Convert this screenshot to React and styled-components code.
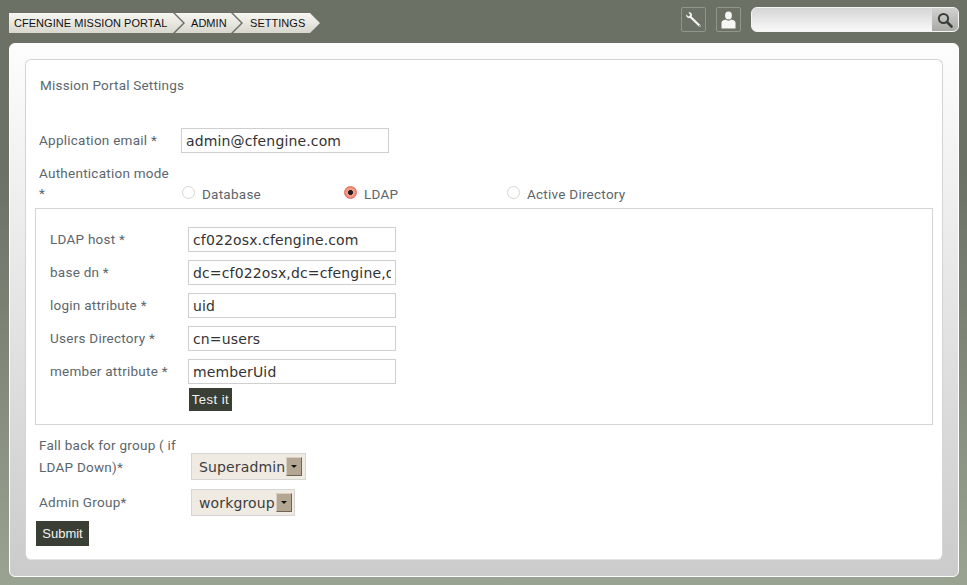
import React from 'react'
import styled, { createGlobalStyle } from 'styled-components'

const Global = createGlobalStyle`
html, body {
  margin: 0;
  padding: 0;
  height: 100%;
}
body {
  background: linear-gradient(#6b7165 0%, #6b7165 30%, #9aa392 100%);
  font-family: Roboto, "Liberation Sans", sans-serif;
}
`

const Page = styled.div`
  width: 967px;
  height: 585px;
  padding: 0 8px 8px 9px;
  box-sizing: border-box;
  display: flex;
  flex-direction: column;
  overflow: hidden;
`

const TopBar = styled.header`
  height: 43px;
  display: flex;
  align-items: flex-start;
  justify-content: space-between;
`

const Crumbs = styled.nav`
  display: flex;
  margin-top: 13px;
`

const Crumb = styled.span`
  height: 20px;
  display: flex;
  align-items: center;
  box-sizing: border-box;
  width: ${p => p.$w}px;
  padding-left: ${p => p.$pad}px;
  margin-left: ${p => (p.$first ? 0 : -8)}px;
  font: 11px "Liberation Sans", Arial, sans-serif;
  letter-spacing: 0.04px;
  color: #111;
  background: linear-gradient(#f7f6f2, #d9d8ce);
  clip-path: ${p => p.$first
    ? 'polygon(0 0, calc(100% - 10px) 0, 100% 50%, calc(100% - 10px) 100%, 0 100%)'
    : 'polygon(0 0, calc(100% - 10px) 0, 100% 50%, calc(100% - 10px) 100%, 0 100%, 10px 50%)'};
`

const Tools = styled.div`
  display: flex;
  align-items: center;
  margin-top: 7px;
`

const ToolButton = styled.a`
  width: 25px;
  height: 25px;
  margin-right: 10px;
  box-sizing: border-box;
  border: 1px solid #92978c;
  border-radius: 2px;
  display: flex;
  align-items: center;
  justify-content: center;
`

const Search = styled.div`
  width: 208px;
  height: 25px;
  box-sizing: border-box;
  border: 1px solid #f4f4f2;
  border-radius: 6px;
  overflow: hidden;
  display: flex;
  background: linear-gradient(#d6d6d6, #f8f8f8);
`

const SearchField = styled.div`
  flex: 1;
`

const SearchButton = styled.div`
  width: 26px;
  display: flex;
  align-items: center;
  justify-content: center;
  background: linear-gradient(#d2d2d0, #a9aaa6);
`

const Outer = styled.main`
  width: 950px;
  height: 534px;
  box-sizing: border-box;
  padding: 15px;
  border: 1px solid #fff;
  border-radius: 6px;
  background: linear-gradient(#fdfdfd, #cbcbcb);
`

const Inner = styled.section`
  height: 501px;
  box-sizing: border-box;
  background: #fff;
  border: 1px solid #d4d4d4;
  border-bottom-color: #e4e4e4;
  border-radius: 6px;
  padding: 0 9px;
  color: #5c666c;
  font-size: 13.5px;
`

const Title = styled.h1`
  margin: 16px 0 0 5px;
  font-size: 13.5px;
  font-weight: 400;
  line-height: 18px;
  letter-spacing: 0.2px;
  color: #5c6870;
`

const Row = styled.div`
  display: flex;
  align-items: ${p => p.$align || 'center'};
  margin-top: ${p => p.$top || 0}px;
`

const Label = styled.label`
  display: block;
  box-sizing: border-box;
  width: ${p => p.$w ?? 142}px;
  margin: ${p => p.$shift ?? -2}px 0 ${p => p.$below ?? 0}px ${p => p.$left ?? 4}px;
  padding-right: ${p => p.$wrap ?? 0}px;
  line-height: ${p => p.$lh ?? 22}px;
  letter-spacing: 0.25px;
  flex-shrink: 0;
`

const Field = styled.input`
  width: 208px;
  height: 25px;
  box-sizing: border-box;
  padding: 0 4px;
  border: 1px solid #cfcfcf;
  background: #fff;
  outline: none;
  font: 14px "DejaVu Sans", Verdana, sans-serif;
  letter-spacing: 0.14px;
  color: #333;
`

const RadioGroup = styled.div`
  display: flex;
  margin-left: 1px;
`

const RadioOption = styled.div`
  width: ${p => p.$w}px;
  display: flex;
  align-items: center;
  letter-spacing: 0.25px;
  line-height: 18px;
`

const RadioDot = styled.span`
  width: 13px;
  height: 13px;
  margin: -3px 7px 0 0;
  box-sizing: border-box;
  border-radius: 50%;
  border: 1px solid ${p => (p.$on ? '#e0705c' : '#d8d6cf')};
  background: ${p => (p.$on
    ? 'radial-gradient(circle, #222 0 2.2px, #f5a596 2.8px, #ec6a56 100%)'
    : '#fff')};
`

const LdapBox = styled.fieldset`
  margin: 5px 0 0 0;
  padding: 18px 0 13px 14px;
  height: 217px;
  box-sizing: border-box;
  border: 1px solid #d4d4d4;
`

const LdapRow = styled(Row)`
  margin-bottom: 8px;
`

const ActionButton = styled.button`
  display: block;
  border: none;
  padding: 0;
  height: ${p => p.$h}px;
  width: ${p => p.$w}px;
  margin: ${p => p.$top ?? 0}px 0 0 ${p => p.$left}px;
  background: #3a3f35;
  color: #f2f2f2;
  font: 13px "Liberation Sans", Arial, sans-serif;
  letter-spacing: ${p => p.$spacing ?? 0}px;
`

const Select = styled.div`
  width: ${p => p.$w}px;
  height: 27px;
  box-sizing: border-box;
  border: 1px solid #d5d5d3;
  background: #efeae2;
  display: flex;
  align-items: center;
  padding-left: 7px;
  font: 14px "DejaVu Sans", Verdana, sans-serif;
  letter-spacing: 0.14px;
  color: #3d3d3d;
`

const SelectArrow = styled.span`
  width: 16px;
  height: 19px;
  margin-left: 1px;
  box-sizing: border-box;
  border: 1px solid;
  border-color: #d8d0c2 #6e6558 #6e6558 #d8d0c2;
  background: #b3a692;
  display: flex;
  align-items: center;
  justify-content: center;

  &::after {
    content: "";
    border: 3px solid transparent;
    border-top: 3px solid #111;
    border-bottom: none;
  }
`

const ldapFields = [
  ['LDAP host *', 'cf022osx.cfengine.com'],
  ['base dn *', 'dc=cf022osx,dc=cfengine,dc=com'],
  ['login attribute *', 'uid'],
  ['Users Directory *', 'cn=users'],
  ['member attribute *', 'memberUid'],
]

const WrenchIcon = () => (
  <svg width="18" height="18" viewBox="0 0 18 18">
    <path d="M1.2 3.6 L3.6 5.6 L5.4 4 L3.4 1.4 C5.4 .8 7 2 7 4 C7 4.6 6.9 5 6.7 5.4 L15.4 14 C16.4 15.4 15 16.6 13.8 15.6 L5 7 C3 7.6 .8 6.2 1.2 3.6 Z" fill="#f4f4f2" />
    <circle cx="14.6" cy="14.8" r=".7" fill="#6b7165" />
  </svg>
)

const UserIcon = () => (
  <svg width="15" height="18" viewBox="0 0 15 18">
    <ellipse cx="7.5" cy="4.4" rx="3.4" ry="4" fill="#f6f6f4" />
    <path d="M.5 17.5 V11.5 C.5 10 2.5 9.2 4.9 8.6 C6 10 9 10 10.1 8.6 C12.5 9.2 14.5 10 14.5 11.5 V17.5 Z" fill="#f6f6f4" />
  </svg>
)

const SearchIcon = () => (
  <svg width="16" height="16" viewBox="0 0 16 16" fill="none" stroke="#3a3f3a">
    <circle cx="6.5" cy="6.5" r="4.6" strokeWidth="2" />
    <path d="M10 10 L14.5 14.5" strokeWidth="2.6" strokeLinecap="round" />
  </svg>
)

export default function App() {
  return (
    <Page>
      <Global />
      <TopBar>
        <Crumbs>
          <Crumb $first $w={174} $pad={5}>CFENGINE MISSION PORTAL</Crumb>
          <Crumb $w={66} $pad={16}>ADMIN</Crumb>
          <Crumb $w={87} $pad={17}>SETTINGS</Crumb>
        </Crumbs>
        <Tools>
          <ToolButton><WrenchIcon /></ToolButton>
          <ToolButton><UserIcon /></ToolButton>
          <Search>
            <SearchField />
            <SearchButton><SearchIcon /></SearchButton>
          </Search>
        </Tools>
      </TopBar>

      <Outer>
        <Inner>
          <Title>Mission Portal Settings</Title>

          <Row $top={34}>
            <Label>Application email *</Label>
            <Field defaultValue="admin@cfengine.com" />
          </Row>

          <Row $top={10} $align="flex-end">
            <Label $wrap={10} $lh={20} $shift={0}>Authentication mode *</Label>
            <RadioGroup>
              <RadioOption $w={162}><RadioDot />Database</RadioOption>
              <RadioOption $w={163}><RadioDot $on />LDAP</RadioOption>
              <RadioOption $w={150}><RadioDot />Active Directory</RadioOption>
            </RadioGroup>
          </Row>

          <LdapBox>
            {ldapFields.map(([label, value]) => (
              <LdapRow key={label}>
                <Label $w={138} $left={0}>{label}</Label>
                <Field defaultValue={value} />
              </LdapRow>
            ))}
            <ActionButton $w={43} $h={23} $left={139} $top={-4} $spacing={0.5}>Test it</ActionButton>
          </LdapBox>

          <Row $top={9} $align="flex-end">
            <Label $w={152} $shift={0} $below={2}>Fall back for group ( if LDAP Down)*</Label>
            <Select $w={115}>Superadmin<SelectArrow /></Select>
          </Row>

          <Row $top={9}>
            <Label $w={152}>Admin Group*</Label>
            <Select $w={104}>workgroup<SelectArrow /></Select>
          </Row>

          <ActionButton $w={53} $h={25} $left={1} $top={5}>Submit</ActionButton>
        </Inner>
      </Outer>
    </Page>
  )
}
